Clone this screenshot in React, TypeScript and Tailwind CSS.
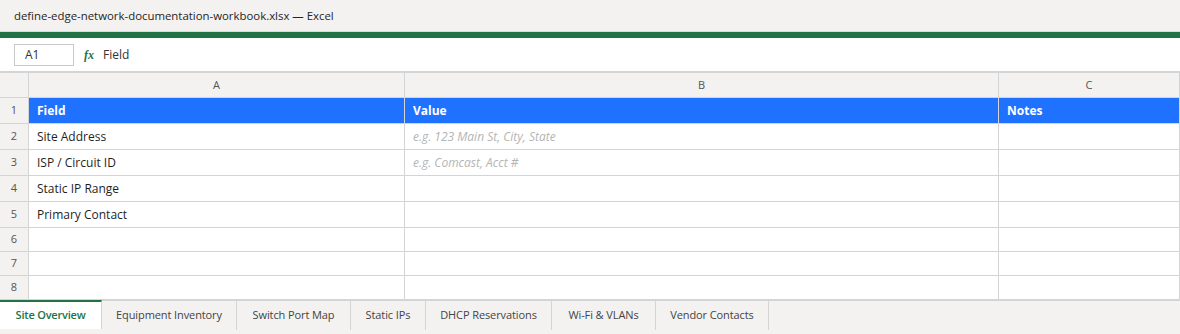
import React from "react";

const cols = ["A", "B", "C"];

const rows: { a: string; b: string; bPlaceholder?: boolean; h: string }[] = [
  { a: "Site Address", b: "e.g. 123 Main St, City, State", bPlaceholder: true, h: "h-[26px]" },
  { a: "ISP / Circuit ID", b: "e.g. Comcast, Acct #", bPlaceholder: true, h: "h-[26px]" },
  { a: "Static IP Range", b: "", h: "h-[26px]" },
  { a: "Primary Contact", b: "", h: "h-[26px]" },
  { a: "", b: "", h: "h-[24px]" },
  { a: "", b: "", h: "h-[24px]" },
  { a: "", b: "", h: "h-[24px]" },
];

// widths measured off the tab strip
const tabs = [
  { name: "Site Overview", w: "w-[102px]" },
  { name: "Equipment Inventory", w: "w-[135px]" },
  { name: "Switch Port Map", w: "w-[114px]" },
  { name: "Static IPs", w: "w-[75px]" },
  { name: "DHCP Reservations", w: "w-[126px]" },
  { name: "Wi-Fi & VLANs", w: "w-[104px]" },
  { name: "Vendor Contacts", w: "w-[113px]" },
];

const gridCols = "grid grid-cols-[29px_376px_594px_181px]";

export default function App() {
  return (
    <div className="w-[1180px] h-[334px] overflow-hidden bg-white text-[12px] text-[#1f1f1f] font-['Open_Sans','Noto_Sans',sans-serif]">
      {/* title bar */}
      <div className="h-[32px] bg-[#f3f2f1] border-b border-[#dcdcdc] flex items-center px-[14px] text-[11.4px] text-[#252525]">
        define-edge-network-documentation-workbook.xlsx — Excel
      </div>
      <div className="h-[6px] bg-[#217346]" />

      {/* formula bar */}
      <div className="h-[33px] flex items-center px-[14px]">
        <div className="w-[60px] h-[22px] border border-[#c8c8c8] flex items-center pl-[10px] text-[#333]">A1</div>
        <span className="ml-[10px] italic font-bold text-[#217346] font-['Liberation_Serif',serif] text-[12px]">fx</span>
        <span className="ml-[9px] text-[#333]">Field</span>
      </div>

      {/* sheet grid */}
      <div className="border-t-2 border-[#d4d4d4]">
        <div className={`${gridCols} h-[25px] bg-[#f3f2f1] border-b border-[#d4d4d4]`}>
          <div className="border-r border-[#d4d4d4]" />
          {cols.map((c) => (
            <div key={c} className="border-r border-[#d4d4d4] flex items-center justify-center text-[11px] text-[#555]">
              {c}
            </div>
          ))}
        </div>

        <div className={`${gridCols} h-[26px] border-b border-[#d4d4d4]`}>
          <div className="bg-[#f3f2f1] border-r border-[#d4d4d4] flex items-center justify-center text-[11px] text-[#555]">1</div>
          {["Field", "Value", "Notes"].map((h) => (
            <div key={h} className="bg-[#1f71ff] border-r border-[#d4d4d4] flex items-center px-[8px] font-bold text-white">
              {h}
            </div>
          ))}
        </div>

        {rows.map((r, i) => (
          <div key={i} className={`${gridCols} ${r.h} border-b border-[#d4d4d4]`}>
            <div className="bg-[#f3f2f1] border-r border-[#d4d4d4] flex items-center justify-center text-[11px] text-[#555]">
              {i + 2}
            </div>
            <div className="border-r border-[#d4d4d4] flex items-center px-[8px]">{r.a}</div>
            <div className={`border-r border-[#d4d4d4] flex items-center px-[8px] ${r.bPlaceholder ? "italic text-[#b4b4b4]" : ""}`}>
              {r.b}
            </div>
            <div className="border-r border-[#d4d4d4]" />
          </div>
        ))}
      </div>

      {/* sheet tabs */}
      <div className="h-[36px] bg-[#f3f2f1] border-t border-[#d4d4d4] flex text-[11px]">
        {tabs.map((t, i) => (
          <div
            key={t.name}
            className={
              i === 0
                ? `${t.w} h-[29px] -mt-px flex items-center justify-center bg-white border-t-2 border-[#217346] border-r border-r-[#d4d4d4] font-semibold text-[#217346] tracking-[-0.2px]`
                : `${t.w} h-[29px] flex items-center justify-center border-r border-[#d4d4d4] text-[#444] tracking-[-0.1px]`
            }
          >
            {t.name}
          </div>
        ))}
      </div>
    </div>
  );
}
